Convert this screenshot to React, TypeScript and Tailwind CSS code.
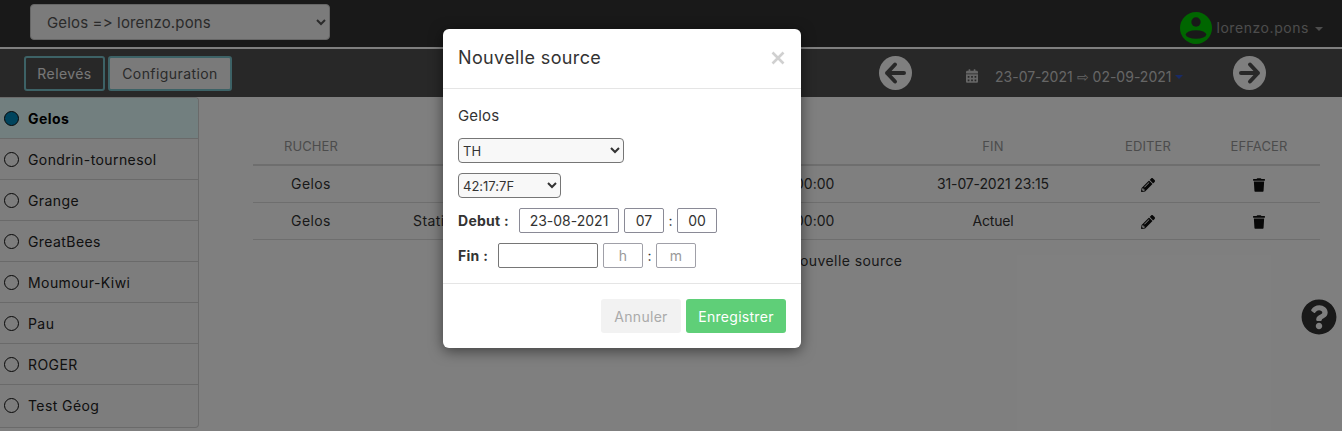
import { FaCalendarAlt, FaPencilAlt, FaQuestionCircle, FaTrash } from "react-icons/fa";

const ruchers = ["Gelos", "Gondrin-tournesol", "Grange", "GreatBees", "Moumour-Kiwi", "Pau", "ROGER", "Test Géog"];

const rows = [
  { rucher: "Gelos", type: "", debut: "00:00", fin: "31-07-2021 23:15" },
  { rucher: "Gelos", type: "Stati", debut: "00:00", fin: "Actuel" },
];

const tableCols = "grid grid-cols-[116px_44px_60px_322px_40px_53px_210px_100px_122px] items-center";

function UserIcon() {
  return (
    <svg viewBox="0 0 32 32" className="w-[32px] h-[32px]">
      <circle cx="16" cy="16" r="16" fill="#00cc00" />
      <circle cx="16" cy="10" r="4.7" fill="#333" />
      <ellipse cx="16" cy="22.5" rx="10.3" ry="4.3" fill="#333" />
    </svg>
  );
}

function NavArrow({ flip }: { flip?: boolean }) {
  return (
    <svg viewBox="0 0 33 34" className={`w-[33px] h-[34px] ${flip ? "-scale-x-100" : ""}`}>
      <ellipse cx="16.5" cy="17" rx="16.5" ry="17" fill="#ffffff" />
      <path d="M8 17 H25 M16 8.5 L8 17 L16 25.5" fill="none" stroke="#505050" strokeWidth="4" strokeLinecap="round" strokeLinejoin="round" />
    </svg>
  );
}

function Sidebar() {
  return (
    <div className="w-[199px] h-[331px] border border-l-0 border-[#d4d4d4] rounded-r-[4px] bg-[#fafafa] overflow-hidden">
      {ruchers.map((name, i) => (
        <div
          key={name}
          className={`h-[41px] flex items-center pl-[4px] gap-[9px] text-[14px] tracking-[0.03em] text-[#222] ${i < 7 ? "border-b border-[#d4d4d4]" : ""} ${i === 0 ? "bg-[#e4ffff] font-bold text-black" : ""}`}
        >
          <span className={`w-[15px] h-[15px] rounded-full border border-[#111] ${i === 0 ? "bg-[#0088bb]" : ""}`} />
          {name}
        </div>
      ))}
    </div>
  );
}

function SourceTable() {
  return (
    <div className="ml-[54px] mt-[35px] w-[1067px] text-[14px] text-[#333]">
      <div className={`${tableCols} h-[34px] pb-[2px] border-b-2 border-[#ddd] text-[13px] text-[#999] tracking-[0.01em]`}>
        <div className="text-center">RUCHER</div>
        <div className="col-start-7 text-center">FIN</div>
        <div className="text-center">EDITER</div>
        <div className="text-center">EFFACER</div>
      </div>
      {rows.map((r) => (
        <div key={r.fin} className={`${tableCols} h-[37px] pb-[2px] border-b border-[#ddd]`}>
          <div className="text-center tracking-[0.03em]">{r.rucher}</div>
          <div className="col-start-3 tracking-[0.03em]">{r.type}</div>
          <div className="col-start-5">{r.debut}</div>
          <div className="col-start-7 text-center tracking-[-0.01em]">{r.fin}</div>
          <div className="flex justify-center pt-[3px]">
            <FaPencilAlt className="w-[14px] h-[14px] text-[#111]" />
          </div>
          <div className="flex justify-center pt-[3px]">
            <FaTrash className="w-[12px] h-[14px] text-[#111]" />
          </div>
        </div>
      ))}
      <div className="mt-[10px] ml-[536px] tracking-[0.03em]">Nouvelle source</div>
    </div>
  );
}

function Modal() {
  return (
    <div className="absolute left-[443px] top-[29px] w-[358px] h-[319px] bg-white rounded-[6px] shadow-[0_3px_14px_rgba(0,0,0,0.5)] flex flex-col text-[#333]">
      <div className="h-[60px] pb-[2px] border-b border-[#e5e5e5] flex items-center justify-between pl-[15px] pr-[16px]">
        <span className="text-[18px] leading-none tracking-[0.02em]">Nouvelle source</span>
        <svg viewBox="0 0 14 14" className="w-[14px] h-[14px]">
          <path d="M1.5 1.5 L12.5 12.5 M12.5 1.5 L1.5 12.5" stroke="#d0d0d0" strokeWidth="2.6" />
        </svg>
      </div>
      <div className="flex-1 px-[15px] pt-[17px] text-[14px]">
        <div className="h-[20px] leading-[20px] text-[15px] tracking-[0.01em]">Gelos</div>
        <select className="mt-[12px] block w-[166px] h-[25px] border border-[#767676] rounded-[4px] bg-[#f8f8f8] text-[13px]">
          <option>TH</option>
        </select>
        <select className="mt-[10px] block w-[103px] h-[25px] border border-[#767676] rounded-[4px] bg-[#f8f8f8] text-[13px]">
          <option>42:17:7F</option>
        </select>
        <div className="mt-[10px] h-[25px] flex items-center font-bold">
          <span className="w-[61px] tracking-[0.02em]">Debut :</span>
          <div className="w-[100px] h-[25px] border border-[#8a8a96] rounded-[2px] flex items-center justify-center font-normal">23-08-2021</div>
          <div className="ml-[5px] w-[40px] h-[25px] border border-[#8a8a96] rounded-[2px] flex items-center justify-center font-normal">07</div>
          <span className="w-[13px] text-center font-normal">:</span>
          <div className="w-[40px] h-[25px] border border-[#8a8a96] rounded-[2px] flex items-center justify-center font-normal">00</div>
        </div>
        <div className="mt-[10px] h-[25px] flex items-center font-bold">
          <span className="w-[40px] tracking-[0.02em]">Fin :</span>
          <div className="w-[100px] h-[25px] border border-[#767676] rounded-[2px]" />
          <div className="ml-[5px] w-[40px] h-[25px] border border-[#a0a0a8] rounded-[2px] flex items-center justify-center font-normal text-[#999]">h</div>
          <span className="w-[13px] text-center font-normal">:</span>
          <div className="w-[40px] h-[25px] border border-[#a0a0a8] rounded-[2px] flex items-center justify-center font-normal text-[#999]">m</div>
        </div>
      </div>
      <div className="h-[65px] border-t border-[#e5e5e5] flex justify-end items-center gap-[5px] pr-[15px] text-[14px] tracking-[0.02em]">
        <div className="w-[80px] h-[34px] rounded-[3px] bg-[#f2f2f2] text-[#aaa] flex items-center justify-center">Annuler</div>
        <div className="w-[100px] h-[34px] rounded-[3px] bg-[#5fcf78] text-white flex items-center justify-center">Enregistrer</div>
      </div>
    </div>
  );
}

export default function App() {
  return (
    <div className="relative h-screen overflow-hidden bg-white font-['Inter',sans-serif] [font-variant-ligatures:none] [font-feature-settings:'calt'_0]">
      <div className="h-[47px] bg-[#333] pl-[30px] pt-[4px] flex justify-between">
        <select className="w-[300px] h-[36px] bg-[#f6f6f6] border border-[#ccc] rounded-[4px] text-[15px] tracking-[0.01em] text-[#555] pl-[12px]">
          <option>Gelos =&gt; lorenzo.pons</option>
        </select>
        <div className="flex items-center h-[40px] pt-[7px] pr-[19px] text-[14px] tracking-[0.04em] text-[#9a9a9a] gap-[4px]">
          <UserIcon />
          <span>lorenzo.pons</span>
          <span className="ml-[2px] mt-[2px] border-x-[4px] border-x-transparent border-t-[4px] border-t-[#9a9a9a]" />
        </div>
      </div>
      <div className="h-[2px] bg-white" />
      <div className="h-[48px] bg-[#505050] flex items-center pl-[24px] text-[14px]">
        <div className="w-[81px] h-[35px] border-2 border-[#7ac4cc] rounded-[3px] text-[#eee] tracking-[0.03em] flex items-center justify-center">Relevés</div>
        <div className="ml-[3px] w-[124px] h-[35px] border-2 border-[#7ac4cc] rounded-[3px] bg-[#f4f4f4] text-[#555] tracking-[0.03em] flex items-center justify-center">Configuration</div>
        <div className="ml-[647px]"><NavArrow /></div>
        <FaCalendarAlt className="ml-[54px] mt-[6px] w-[12px] h-[14px] text-[#ccc]" />
        <span className="ml-[17px] mt-[6px] text-[#ccc]">23-07-2021 ⇨ 02-09-2021</span>
        <span className="ml-[4px] mt-[8px] border-x-[4px] border-x-transparent border-t-[4px] border-t-[#3355cc]" />
        <div className="ml-[50px]"><NavArrow flip /></div>
      </div>
      <div className="flex">
        <Sidebar />
        <SourceTable />
      </div>
      <FaQuestionCircle className="absolute left-[1301px] top-[299px] w-[36px] h-[36px] text-[#333]" />
      <div className="absolute inset-0 bg-black/50" />
      <Modal />
    </div>
  );
}
